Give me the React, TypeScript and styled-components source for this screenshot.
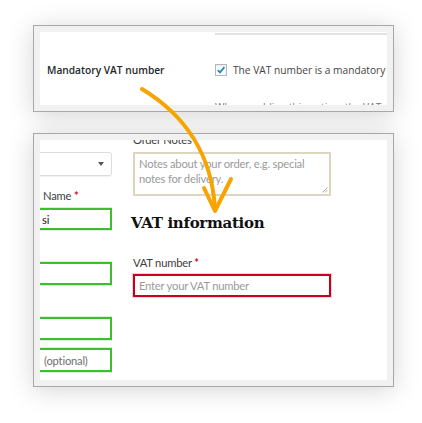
import React from "react";
import styled, { createGlobalStyle } from "styled-components";

const Global = createGlobalStyle`
  html, body { margin: 0; padding: 0; background: #ffffff; }
  #root { width: 422px; height: 423px; }
`;

const Page = styled.div`
  position: relative;
  width: 422px;
  height: 423px;
  box-sizing: border-box;
  padding: 25px 0 0 33px;
  display: flex;
  flex-direction: column;
  gap: 21px;
  overflow: hidden;
`;

const Card = styled.div<{ $h: number }>`
  width: 361px;
  height: ${(p) => p.$h}px;
  box-sizing: border-box;
  border: 1px solid #a8a8a8;
  background: #f1f1f1;
  padding: 6px;
  box-shadow: 0 3px 24px rgba(0, 0, 0, 0.17);
`;

const Sheet = styled.div`
  background: #ffffff;
  height: 100%;
  overflow: hidden;
`;

/* ---------- top card (admin setting) ---------- */

const InputEdge = styled.div`
  margin: 1px 0 0 175px;
  height: 2px;
  background: #e2e2e2;
`;

const SettingRow = styled.div`
  margin-top: 23px;
  height: 24px;
  display: grid;
  grid-template-columns: 175px 1fr;
  align-items: center;
  font-family: "Open Sans", sans-serif;
  font-size: 10.2px;
  white-space: nowrap;
`;

const SettingLabel = styled.div`
  padding-left: 7px;
  font-weight: 600;
  color: #23282d;
`;

const CheckField = styled.label`
  display: flex;
  align-items: center;
  gap: 6px;
  color: #444;
  overflow: hidden;
`;

const CheckBox = styled.span`
  width: 12px;
  height: 12px;
  box-sizing: border-box;
  border: 1px solid #b4b9be;
  box-shadow: inset 0 1px 2px rgba(0, 0, 0, 0.1);
  display: flex;
  align-items: center;
  justify-content: center;
  flex: none;
`;

const Description = styled.div`
  margin: 17px 0 0 175px;
  font-family: "Open Sans", sans-serif;
  font-size: 10.2px;
  line-height: 16px;
  color: #777;
  white-space: nowrap;
`;

/* ---------- bottom card (checkout form) ---------- */

const Form = styled.div`
  display: flex;
  gap: 21px;
  height: 100%;
  font-family: "Source Sans Pro", "Lato", sans-serif;
  letter-spacing: -0.2px;
`;

const LeftCol = styled.div`
  width: 72px;
  overflow: hidden;
  display: flex;
  flex-direction: column;
`;

const RightCol = styled.div`
  width: 198px;
  display: flex;
  flex-direction: column;
`;

const Select = styled.div`
  margin: 12px 0 0 -30px;
  height: 24px;
  box-sizing: border-box;
  border: 1px solid #dcdcdc;
  border-radius: 3px;
  box-shadow: 0 1px 1px rgba(0, 0, 0, 0.06);
  display: flex;
  justify-content: flex-end;
  align-items: center;
  padding-right: 7px;
`;

const Caret = styled.span`
  width: 0;
  height: 0;
  border-left: 3px solid transparent;
  border-right: 3px solid transparent;
  border-top: 4px solid #555;
`;

const Label = styled.div<{ $mt: number; $ml?: number }>`
  margin-top: ${(p) => p.$mt}px;
  margin-left: ${(p) => p.$ml ?? 0}px;
  font-size: 11.2px;
  line-height: 16px;
  color: #3d3d3d;
  white-space: nowrap;
`;

const Req = styled.span`
  color: #e0001b;
  font-weight: 700;
`;

const Field = styled.div<{ $mt: number; $h: number; $tone: "ok" | "error" }>`
  margin-top: ${(p) => p.$mt}px;
  height: ${(p) => p.$h}px;
  box-sizing: border-box;
  border: 2px solid ${(p) => (p.$tone === "ok" ? "#3cbf2e" : "#c9001d")};
  box-shadow: 0 0 0 1px
    ${(p) => (p.$tone === "ok" ? "rgba(60,191,46,0.2)" : "rgba(201,0,29,0.18)")};
  display: flex;
  align-items: center;
  font-size: 11.2px;
  white-space: nowrap;
  overflow: hidden;
`;

const LeftField = styled(Field)`
  margin-left: -30px;
  padding-left: 30px;
  color: #222;
`;

const Muted = styled.span`
  color: #6f6f6f;
  margin-left: 2px;
`;

const RightField = styled(Field)`
  padding-left: 4px;
  color: #9a9a9a;
`;

const NotesArea = styled.div`
  position: relative;
  margin-top: 4px;
  height: 44px;
  box-sizing: border-box;
  border: 2px solid #ddd5bf;
  padding: 2px 4px;
  font-size: 11.2px;
  line-height: 15px;
  color: #9a9a9a;
`;

const Grip = styled.svg`
  position: absolute;
  right: 1px;
  bottom: 1px;
`;

const Heading = styled.h3`
  margin: 15px 0 0 -2px;
  font-family: "DejaVu Serif", serif;
  font-weight: 700;
  font-size: 15px;
  line-height: 24px;
  color: #111;
  letter-spacing: -0.3px;
`;

const ArrowLayer = styled.svg`
  position: absolute;
  left: 0;
  top: 0;
  pointer-events: none;
`;

export default function App() {
  return (
    <>
      <Global />
      <Page>
        <Card $h={87}>
          <Sheet>
            <InputEdge />
            <SettingRow>
              <SettingLabel>Mandatory VAT number</SettingLabel>
              <CheckField>
                <CheckBox>
                  <svg width="10" height="10" viewBox="0 0 10 10">
                    <path
                      d="M1.8 5.2 L4 7.4 L8.4 2.2"
                      fill="none"
                      stroke="#1e8cbe"
                      strokeWidth="1.8"
                    />
                  </svg>
                </CheckBox>
                The VAT number is a mandatory field
              </CheckField>
            </SettingRow>
            <Description>
              When enabling this option, the VAT number must be entered.
            </Description>
          </Sheet>
        </Card>
        <Card $h={254}>
          <Sheet>
            <Form>
              <LeftCol>
                <Select>
                  <Caret />
                </Select>
                <Label $mt={12} $ml={3}>
                  Name <Req>*</Req>
                </Label>
                <LeftField $mt={4} $h={22} $tone="ok">
                  si
                </LeftField>
                <LeftField $mt={32} $h={23} $tone="ok" />
                <LeftField $mt={32} $h={23} $tone="ok" />
                <LeftField $mt={8} $h={24} $tone="ok">
                  <Muted>(optional)</Muted>
                </LeftField>
              </LeftCol>
              <RightCol>
                <Label $mt={-8}>Order Notes</Label>
                <NotesArea>
                  Notes about your order, e.g. special notes for delivery.
                  <Grip width="6" height="6" viewBox="0 0 6 6">
                    <path d="M5.5 0.5 L0.5 5.5 M5.5 3 L3 5.5" stroke="#999" strokeWidth="0.8" />
                  </Grip>
                </NotesArea>
                <Heading>VAT information</Heading>
                <Label $mt={20}>
                  VAT number <Req>*</Req>
                </Label>
                <RightField $mt={3} $h={23} $tone="error">
                  Enter your VAT number
                </RightField>
              </RightCol>
            </Form>
          </Sheet>
        </Card>
        <ArrowLayer width="422" height="423" viewBox="0 0 422 423">
          <path
            d="M142 89 C 185 115 212 155 215 209"
            fill="none"
            stroke="#f7a300"
            strokeWidth="4"
            strokeLinecap="round"
          />
          <path
            d="M204 188 L215 211 L231 179"
            fill="none"
            stroke="#f7a300"
            strokeWidth="4"
            strokeLinecap="round"
            strokeLinejoin="round"
          />
        </ArrowLayer>
      </Page>
    </>
  );
}
